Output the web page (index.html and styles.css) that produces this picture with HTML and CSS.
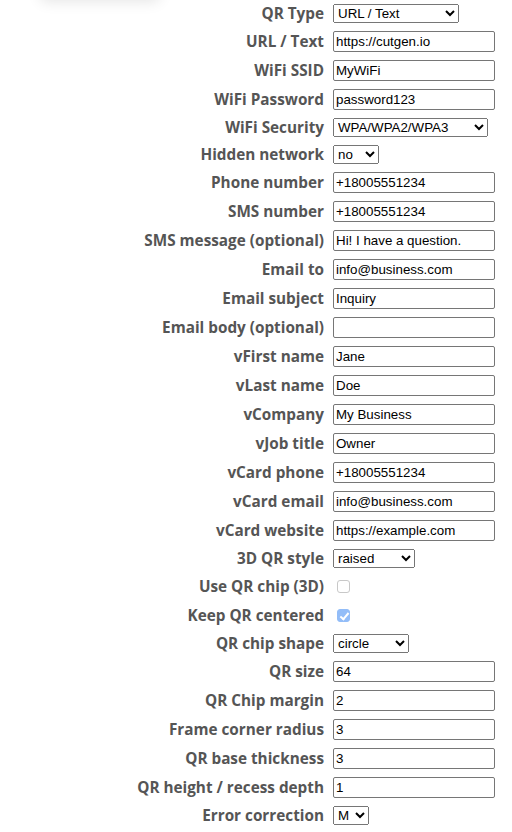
FILE: index.html
```html
<!DOCTYPE html>
<html>
<head>
<meta charset="utf-8">
<link rel="stylesheet" href="styles.css">
</head>
<body>
<div class="topshadow"></div>
<form class="form">
  <label class="lbl">QR Type</label>
  <div class="ctl"><select class="sel w-type"><option>URL / Text</option><option>WiFi network</option></select></div>

  <label class="lbl">URL / Text</label>
  <div class="ctl"><input class="inp" type="text" value="https://cutgen.io"></div>

  <label class="lbl">WiFi SSID</label>
  <div class="ctl"><input class="inp" type="text" value="MyWiFi"></div>

  <label class="lbl">WiFi Password</label>
  <div class="ctl"><input class="inp" type="text" value="password123"></div>

  <label class="lbl">WiFi Security</label>
  <div class="ctl"><select class="sel w-sec"><option>WPA/WPA2/WPA3</option></select></div>

  <label class="lbl">Hidden network</label>
  <div class="ctl"><select class="sel w-hid"><option>no</option><option>yes</option></select></div>

  <label class="lbl">Phone number</label>
  <div class="ctl"><input class="inp" type="text" value="+18005551234"></div>

  <label class="lbl">SMS number</label>
  <div class="ctl"><input class="inp" type="text" value="+18005551234"></div>

  <label class="lbl">SMS message (optional)</label>
  <div class="ctl"><input class="inp" type="text" value="Hi! I have a question."></div>

  <label class="lbl">Email to</label>
  <div class="ctl"><input class="inp" type="text" value="info@business.com"></div>

  <label class="lbl">Email subject</label>
  <div class="ctl"><input class="inp" type="text" value="Inquiry"></div>

  <label class="lbl">Email body (optional)</label>
  <div class="ctl"><input class="inp" type="text" value=""></div>

  <label class="lbl">vFirst name</label>
  <div class="ctl"><input class="inp" type="text" value="Jane"></div>

  <label class="lbl">vLast name</label>
  <div class="ctl"><input class="inp" type="text" value="Doe"></div>

  <label class="lbl">vCompany</label>
  <div class="ctl"><input class="inp" type="text" value="My Business"></div>

  <label class="lbl">vJob title</label>
  <div class="ctl"><input class="inp" type="text" value="Owner"></div>

  <label class="lbl">vCard phone</label>
  <div class="ctl"><input class="inp" type="text" value="+18005551234"></div>

  <label class="lbl">vCard email</label>
  <div class="ctl"><input class="inp" type="text" value="info@business.com"></div>

  <label class="lbl">vCard website</label>
  <div class="ctl"><input class="inp" type="text" value="https://example.com"></div>

  <label class="lbl">3D QR style</label>
  <div class="ctl"><select class="sel w-style"><option>raised</option><option>recessed</option></select></div>

  <label class="lbl">Use QR chip (3D)</label>
  <div class="ctl"><input class="chk" type="checkbox" disabled></div>

  <label class="lbl">Keep QR centered</label>
  <div class="ctl"><input class="chk" type="checkbox" checked disabled></div>

  <label class="lbl">QR chip shape</label>
  <div class="ctl"><select class="sel w-shape"><option>circle</option><option>square</option></select></div>

  <label class="lbl">QR size</label>
  <div class="ctl"><input class="inp" type="text" value="64"></div>

  <label class="lbl">QR Chip margin</label>
  <div class="ctl"><input class="inp" type="text" value="2"></div>

  <label class="lbl">Frame corner radius</label>
  <div class="ctl"><input class="inp" type="text" value="3"></div>

  <label class="lbl">QR base thickness</label>
  <div class="ctl"><input class="inp" type="text" value="3"></div>

  <label class="lbl">QR height / recess depth</label>
  <div class="ctl"><input class="inp" type="text" value="1"></div>

  <label class="lbl">Error correction</label>
  <div class="ctl"><select class="sel w-ec"><option>M</option><option>L</option><option>Q</option><option>H</option></select></div>
</form>
<div class="divider"></div>
</body>
</html>
```

FILE: styles.css
```css
html, body {
  margin: 0;
  padding: 0;
  background: #ffffff;
}
body {
  width: 512px;
  height: 832px;
  overflow: hidden;
  position: relative;
}
.topshadow {
  position: absolute;
  left: 40px;
  top: -40px;
  width: 120px;
  height: 40px;
  border-radius: 6px;
  box-shadow: 0 2px 14px rgba(0, 0, 0, 0.10);
  background: #fff;
}
.form {
  display: grid;
  grid-template-columns: 324px 170px;
  column-gap: 9px;
  row-gap: 8px;
  align-items: center;
  padding-top: 4px;
}
.lbl {
  text-align: right;
  font-family: "Open Sans", sans-serif;
  font-weight: 700;
  font-size: 15.3px;
  line-height: 19px;
  color: #555555;
  white-space: nowrap;
}
.ctl {
  display: flex;
  align-items: center;
}
.inp {
  box-sizing: border-box;
  width: 162px;
  height: 21px;
  margin: 0;
  padding: 1px 2px;
  border: 1px solid #767676;
  border-radius: 2px;
  font-family: "Liberation Sans", Arial, sans-serif;
  font-size: 13.333px;
  color: #000;
}
.sel {
  box-sizing: border-box;
  height: 19px;
  margin: 0;
  font-family: "Liberation Sans", Arial, sans-serif;
  font-size: 13.333px;
  color: #000;
}
.w-type { width: 126px; }
.w-sec { width: 155px; }
.w-hid { width: 46px; }
.w-style { width: 82px; }
.w-shape { width: 76px; }
.w-ec { width: 36px; }
.chk {
  appearance: none;
  -webkit-appearance: none;
  box-sizing: border-box;
  position: relative;
  width: 13px;
  height: 13px;
  margin: 4px 3px 4px 4px;
  border: 1px solid #c8c8c8;
  border-radius: 3px;
  background: #ffffff;
}
.chk:checked {
  border-color: #93bdf8;
  background: #93bdf8;
}
.chk:checked::after {
  content: "";
  position: absolute;
  left: 3.5px;
  top: 0.5px;
  width: 3px;
  height: 7px;
  border-right: 2px solid #ffffff;
  border-bottom: 2px solid #ffffff;
  transform: rotate(40deg);
}
.divider {
  margin-top: 7px;
  border-top: 2px solid #c4c4c4;
}
```
